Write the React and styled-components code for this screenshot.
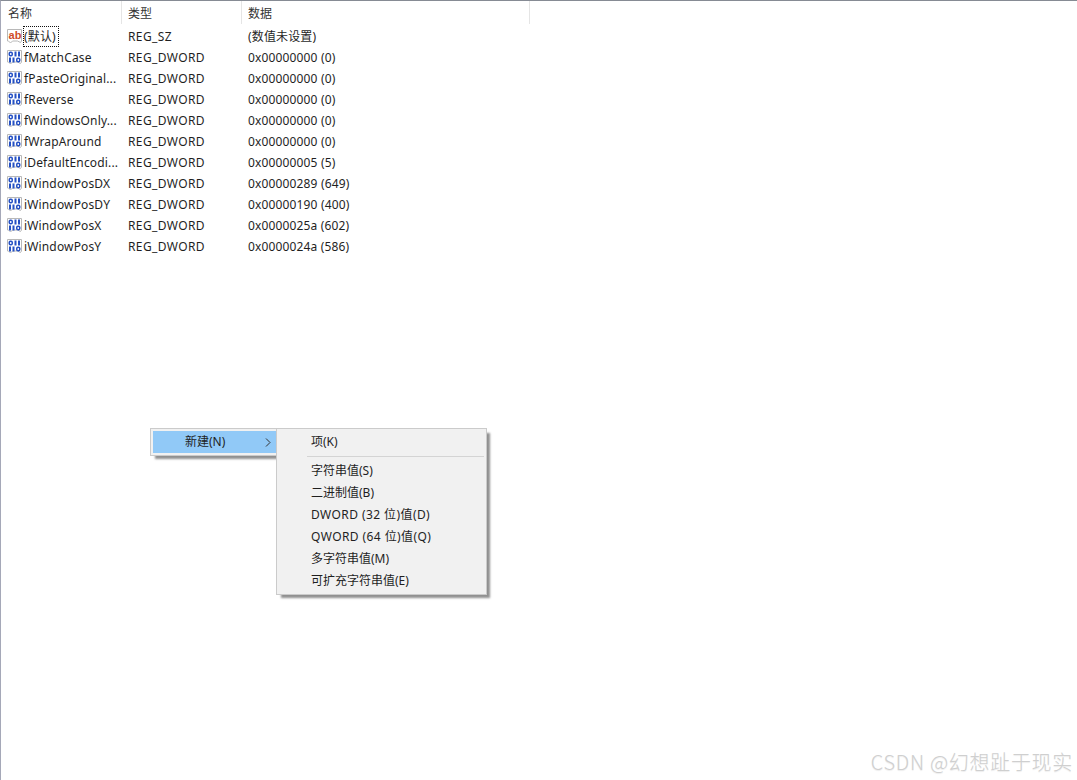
import React from "react";
import styled, { createGlobalStyle } from "styled-components";

const Global = createGlobalStyle`
  html, body { margin: 0; padding: 0; background: #fff; }
  body { font-family: "Noto Sans", "Noto Sans CJK SC", sans-serif; font-size: 12px; color: #1f1f1f; }
`;
const Page = styled.div`
  position: relative; width: 1077px; height: 780px; overflow: hidden; box-sizing: border-box;
  background: #fff; border-top: 1px solid #868b94; border-left: 1px solid #a5a8b8;
`;
const Header = styled.div`display: flex; height: 24px; align-items: flex-start;`;
const HeadCell = styled.div`
  box-sizing: border-box; width: ${p => p.$w}px; height: 23px; padding: 1px 0 0 ${p => p.$pad}px; line-height: 24px;
  color: #333; border-right: 1px solid #e5e5e5; flex: none; letter-spacing: .1px;
`;
const Rows = styled.div`display: flex; flex-direction: column; padding-top: 1px;`;
const Row = styled.div`display: flex; height: 21px; align-items: center; line-height: 21px;`;
const NameCell = styled.div`display: flex; align-items: center; width: 127px; padding-left: 5px; box-sizing: border-box; flex: none; letter-spacing: .15px;`;
const NameText = styled.span`
  margin-left: ${p => (p.$focus ? 0 : 1)}px; padding: 0 ${p => (p.$focus ? 3 : 0)}px 0 ${p => (p.$focus ? 1 : 0)}px; white-space: nowrap;
  ${p => p.$focus && "outline: 1px dotted #111; outline-offset: -1px; height: 21px; line-height: 21px;"}
`;
const TypeCell = styled.div`width: 120px; flex: none; letter-spacing: .38px;`;
const DataCell = styled.div`white-space: nowrap; letter-spacing: .15px;`;
const Menu = styled.div`
  position: absolute; box-sizing: border-box; background: #f1f1f1; border: 1px solid #cbcbcb;
  box-shadow: 4px 4px 2px -1px rgba(70,70,70,.6);
`;
const ParentMenu = styled(Menu)`left: 149px; top: 427px; width: 127px; height: 28px; padding: 2px 0 0 2px;`;
const ActiveItem = styled.div`
  display: flex; align-items: center; height: 22px; background: #91c9f7; padding-left: 32px; line-height: 22px; position: relative; margin-right: -1px;
`;
const Chevron = styled.svg`position: absolute; right: 6px; top: 7px;`;
const SubMenu = styled(Menu)`left: 275px; top: 427px; width: 211px; height: 167px; padding-top: 2px;`;
const SubItem = styled.div`height: 22px; line-height: 22px; padding-left: 34px; white-space: nowrap; letter-spacing: ${p => (p.$latin ? ".42px" : "0")};`;
const Sep = styled.div`height: 1px; background: #d4d4d4; margin: 3px 2px 3px 30px;`;
const Watermark = styled.div`
  position: absolute; right: 4px; bottom: 5px; font-size: 20px; line-height: 26px; color: #cfcfcf; letter-spacing: .7px;
  font-family: "Noto Sans CJK SC", sans-serif; font-weight: 300; text-shadow: 0 1px 1px rgba(0,0,0,.08);
`;

const PageBack = ({ children }) => (
  <svg width="17" height="17" viewBox="0 0 17 17" style={{ flex: "none" }}>
    <path d="M1.5 1.5h14v11.5l-1 1.5-3-1.5h-5l-2 2-2-2h-1z" fill="#fff" stroke="#b8b8b8" />
    {children}
  </svg>
);
const AbIcon = () => (
  <PageBack>
    <text x="2.5" y="11" fontFamily="Liberation Sans" fontWeight="700" fontSize="11" fill="#cf4b29">ab</text>
  </PageBack>
);
const Zero = ({ x, y }) => <rect x={x + 0.75} y={y + 0.75} width="3" height="3.5" rx="1.2" fill="#fff" stroke="#2450c4" strokeWidth="1.5" />;
const One = ({ x, y }) => <rect x={x + 1} y={y} width="2" height="5" fill="#2450c4" />;
const BinIcon = () => (
  <PageBack>
    <Zero x={2.5} y={2.5} /><One x={7.5} y={2.5} /><One x={11} y={2.5} />
    <One x={2} y={8.5} /><One x={5.5} y={8.5} /><Zero x={10} y={8.5} />
  </PageBack>
);

const rows = [
  ["fMatchCase", "0x00000000 (0)"], ["fPasteOriginal...", "0x00000000 (0)"], ["fReverse", "0x00000000 (0)"],
  ["fWindowsOnly...", "0x00000000 (0)"], ["fWrapAround", "0x00000000 (0)"], ["iDefaultEncodi...", "0x00000005 (5)"],
  ["iWindowPosDX", "0x00000289 (649)"], ["iWindowPosDY", "0x00000190 (400)"], ["iWindowPosX", "0x0000025a (602)"],
  ["iWindowPosY", "0x0000024a (586)"],
];
const items = [
  ["字符串值(S)"], ["二进制值(B)"], ["DWORD (32 位)值(D)", true], ["QWORD (64 位)值(Q)", true], ["多字符串值(M)"], ["可扩充字符串值(E)"],
];

export default function App() {
  return (
    <Page>
      <Global />
      <Header>
        <HeadCell $w={121} $pad={7}>名称</HeadCell>
        <HeadCell $w={120} $pad={6}>类型</HeadCell>
        <HeadCell $w={288} $pad={6}>数据</HeadCell>
      </Header>
      <Rows>
        <Row>
          <NameCell><AbIcon /><NameText $focus>(默认)</NameText></NameCell>
          <TypeCell>REG_SZ</TypeCell>
          <DataCell>(数值未设置)</DataCell>
        </Row>
        {rows.map(([n, d]) => (
          <Row key={n}>
            <NameCell><BinIcon /><NameText>{n}</NameText></NameCell>
            <TypeCell>REG_DWORD</TypeCell>
            <DataCell>{d}</DataCell>
          </Row>
        ))}
      </Rows>
      <ParentMenu>
        <ActiveItem>新建(N)
          <Chevron width="6" height="9" viewBox="0 0 6 9"><path d="M1 .5l4 4-4 4" fill="none" stroke="#333" /></Chevron>
        </ActiveItem>
      </ParentMenu>
      <SubMenu>
        <SubItem>项(K)</SubItem>
        <Sep />
        {items.map(([t, l]) => <SubItem key={t} $latin={l}>{t}</SubItem>)}
      </SubMenu>
      <Watermark>CSDN @幻想趾于现实</Watermark>
    </Page>
  );
}
